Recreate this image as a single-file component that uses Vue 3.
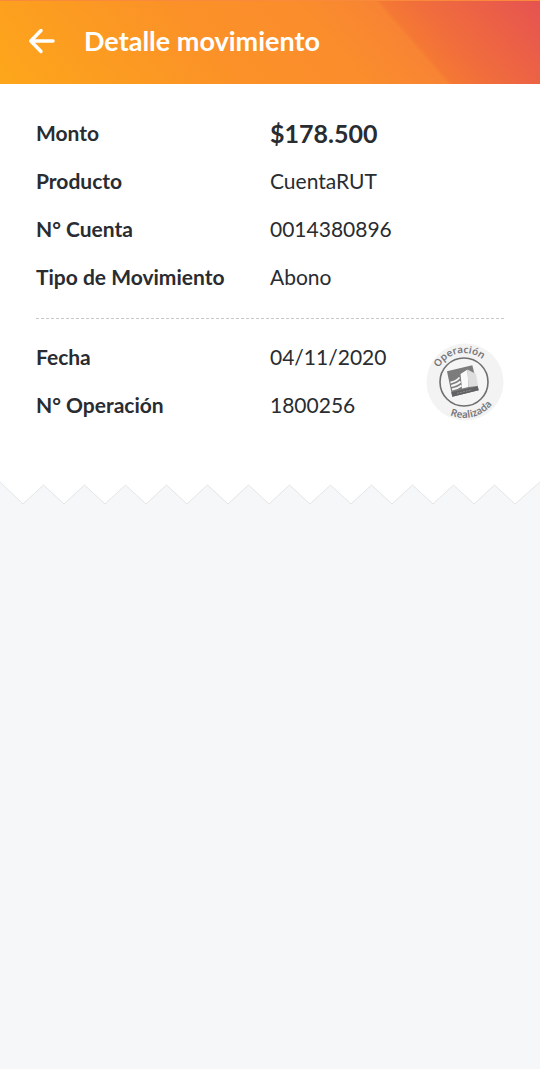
<template>
  <div class="page">
    <header class="topbar">
      <button class="back" type="button" aria-label="Volver">
        <svg viewBox="0 0 28 28" width="28" height="28">
          <path d="M13 3.500 L2.800 14 L13 24.500 M3 14 H25" />
        </svg>
      </button>
      <h1 class="title">Detalle movimiento</h1>
    </header>

    <main class="receipt">
      <dl class="rows">
        <div v-for="row in account" :key="row.label" class="row">
          <dt>{{ row.label }}</dt>
          <dd :class="{ amount: row.amount }">{{ row.value }}</dd>
        </div>
      </dl>

      <section class="operation">
        <dl class="rows">
          <div v-for="row in operation" :key="row.label" class="row">
            <dt>{{ row.label }}</dt>
            <dd>{{ row.value }}</dd>
          </div>
        </dl>

        <!-- Sello -->
        <svg class="stamp" viewBox="0 0 78 78">
          <defs>
            <path id="stamp-top" d="M9 39 A29 29 0 0 1 67 39" />
            <path id="stamp-bottom" d="M2 39 A36 36 0 0 0 74 39" />
          </defs>
          <circle cx="39" cy="39" r="38.500" fill="#f3f3f3" />
          <circle cx="38" cy="39" r="24" fill="#f5f5f5" stroke="#6f6f70" stroke-width="1.600" />
          <polygon points="21,28.300 46.300,22.300 52.700,47.300 26.300,53.700" fill="#7c7c7d" />
          <polygon points="34.500,31 41.500,26.500 42.500,44 36,45.500" fill="#fafafa" />
          <polygon points="41.500,26.500 50,31 52,43 42.500,44" fill="#dedede" />
          <path
            d="M24.500 39.500 Q30 38.500 33.500 34.500 M25.200 43 Q31 42 34.500 38.500 M26 46.500 Q32 45.500 35.500 42.500"
            fill="none"
            stroke="#f5f5f5"
            stroke-width="1.800"
          />
          <polygon points="25.300,49.300 51.700,43.300 52.700,47.300 26.300,53.700" fill="#626264" />
          <path d="M31 50.300 L46 46.800" stroke="#8f8f90" stroke-width="1" stroke-dasharray="2 1" />
          <text class="stamp-text"><textPath href="#stamp-top" startOffset="44%" text-anchor="middle">Operación</textPath></text>
          <text class="stamp-text"><textPath href="#stamp-bottom" startOffset="58%" text-anchor="middle">Realizada</textPath></text>
        </svg>
      </section>
    </main>

    <!-- Borde dentado del comprobante -->
    <svg class="tear" viewBox="0 0 540 24" preserveAspectRatio="none">
      <polygon :points="`0,0 ${tear} 540,0`" fill="#fff" />
      <polyline :points="tear" fill="none" stroke="#e3e6e8" stroke-width="1" />
    </svg>
  </div>
</template>

<script setup>
const account = [
  { label: 'Monto', value: '$178.500', amount: true },
  { label: 'Producto', value: 'CuentaRUT' },
  { label: 'N° Cuenta', value: '0014380896' },
  { label: 'Tipo de Movimiento', value: 'Abono' },
]

const operation = [
  { label: 'Fecha', value: '04/11/2020' },
  { label: 'N° Operación', value: '1800256' },
]

/** Puntos del borde: 13 dientes entre los dos extremos */
function tearPoints(teeth = 13) {
  const pts = ['0,1']
  for (let i = 0; i < teeth; i++) {
    const x = 23 + i * 41
    pts.push(`${x},23`)
    if (i < teeth - 1) pts.push(`${x + 20.5},4`)
  }
  pts.push('540,1')
  return pts.join(' ')
}

const tear = tearPoints()
</script>

<style>
body {
  margin: 0;
  background: #f5f7f9;
}
</style>

<style scoped>
.page {
  min-height: 100vh;
  background: #f5f7f9;
  color: #292c30;
  font-family: Lato, "Noto Sans", sans-serif;
}

/* ── Cabecera ── */
.topbar {
  display: flex;
  align-items: center;
  gap: 28px;
  height: 84px;
  padding: 0 28px 3px;
  box-sizing: border-box;
  border-top: 1px solid #f98a3c;
  background:
    linear-gradient(49deg, transparent 73%, rgba(240, 100, 50, 0.35) 74%, rgba(229, 80, 82, 0.95) 100%),
    linear-gradient(49deg, #fda61a 0%, #fb9128 40%, #fb8d2c 60%, #f67f38 80%);
}

.back {
  display: flex;
  padding: 0;
  border: 0;
  background: none;
  cursor: pointer;
}

.back path {
  fill: none;
  stroke: #fff;
  stroke-width: 3.5;
  stroke-linecap: round;
  stroke-linejoin: round;
}

.title {
  margin: 0;
  color: #fff;
  font-size: 27px;
  font-weight: 700;
  line-height: 32px;
}

/* ── Comprobante ── */
.receipt {
  padding: 25px 36px 52px;
  background: #fff;
}

.rows {
  margin: 0;
}

.row {
  display: grid;
  grid-template-columns: 1fr 1fr;
  align-items: center;
  height: 48px;
  font-size: 21px;
  line-height: 28px;
}

.row dt {
  font-weight: 700;
}

.row dd {
  margin: 0;
}

.row .amount {
  font-size: 25px;
  font-weight: 700;
}

.operation {
  position: relative;
  margin-top: 17px;
  padding-top: 14px;
  border-top: 1px dashed #c6c8ca;
}

.stamp {
  position: absolute;
  top: 24px;
  right: 0;
  width: 78px;
  height: 78px;
  overflow: visible;
}

.stamp-text {
  fill: #77777a;
  font-family: "Noto Sans", sans-serif;
  font-size: 10px;
  font-weight: 600;
}

.tear {
  display: block;
  width: 100%;
  height: 24px;
}
</style>
